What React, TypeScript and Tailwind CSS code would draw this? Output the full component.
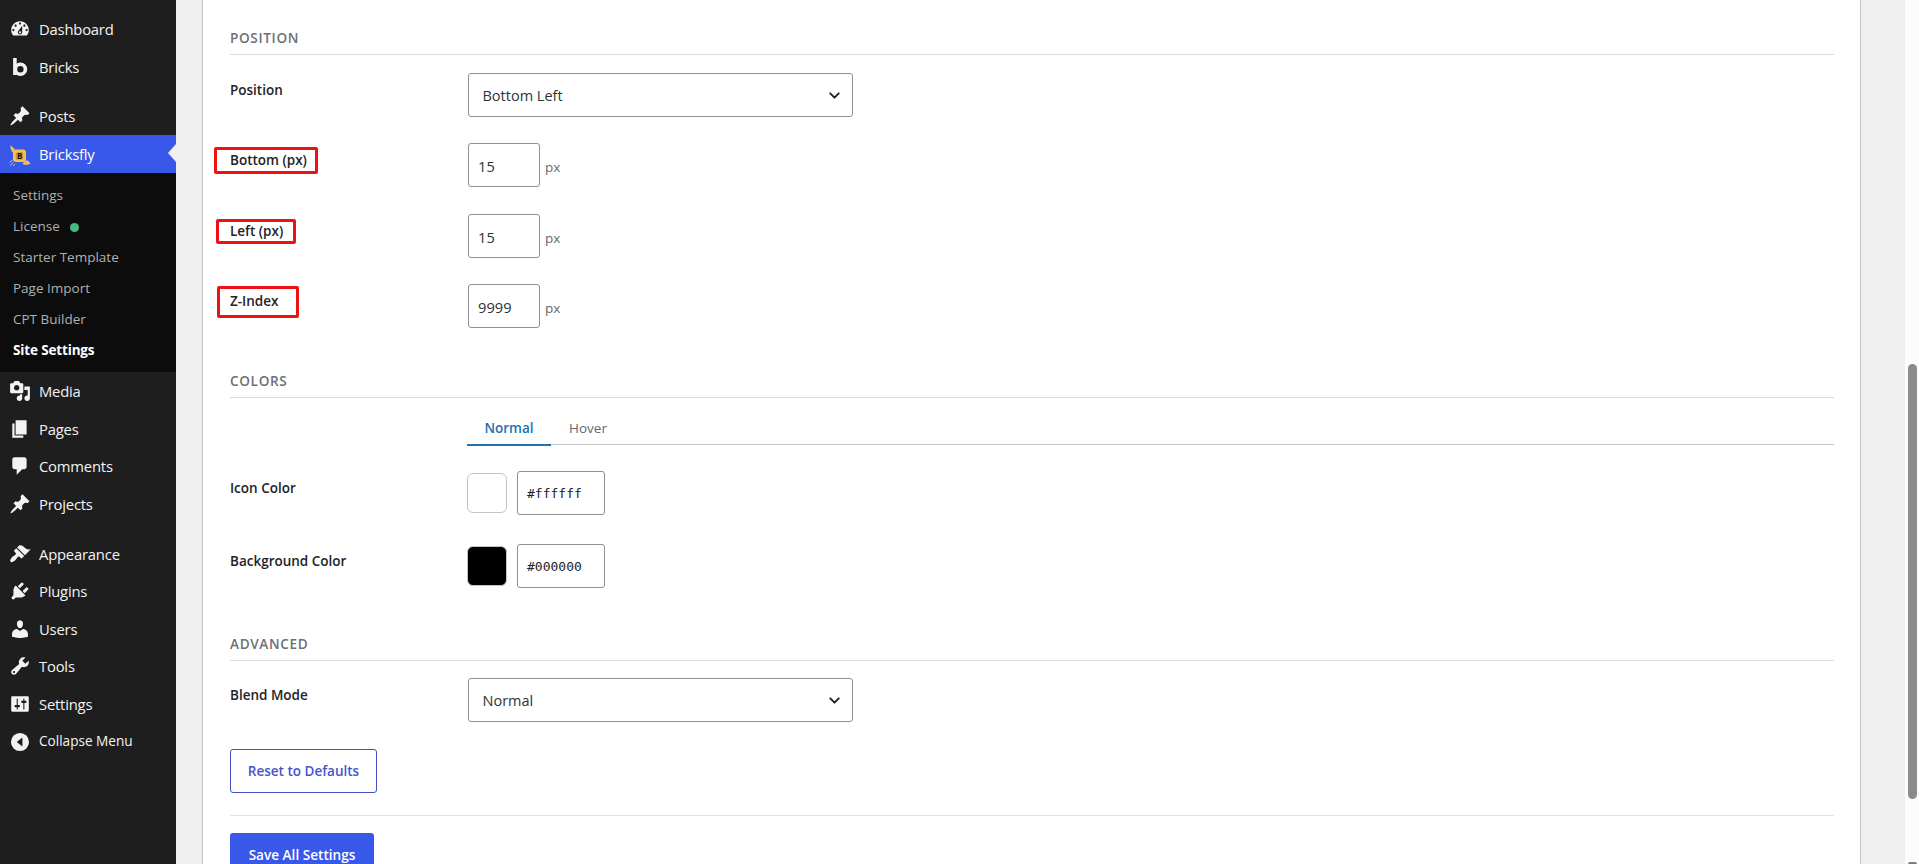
import React from 'react';
import { ChevronDown } from 'lucide-react';

const ICONS: Record<string, string> = {
  dashboard:
    'M3.76 16h12.48c1.1-1.37 1.76-3.11 1.76-5 0-4.42-3.58-8-8-8s-8 3.58-8 8c0 1.89.66 3.63 1.76 5zM10 4c.55 0 1 .45 1 1s-.45 1-1 1-1-.45-1-1 .45-1 1-1zM6 6c.55 0 1 .45 1 1s-.45 1-1 1-1-.45-1-1 .45-1 1-1zm8 0c.55 0 1 .45 1 1s-.45 1-1 1-1-.45-1-1 .45-1 1-1zm-5.37 5.55L12 7v6c0 1.1-.9 2-2 2s-2-.9-2-2c0-.57.24-1.08.63-1.45zM4 10c.55 0 1 .45 1 1s-.45 1-1 1-1-.45-1-1 .45-1 1-1zm12 0c.55 0 1 .45 1 1s-.45 1-1 1-1-.45-1-1 .45-1 1-1zm-5 3c0-.55-.45-1-1-1s-1 .45-1 1 .45 1 1 1 1-.45 1-1z',
  pin: 'M10.44 3.02l1.82-1.82 6.36 6.35-1.83 1.82c-1.05-.68-2.48-.57-3.41.36l-.75.75c-.92.93-1.04 2.35-.35 3.41l-1.83 1.82-2.41-2.41-2.8 2.79c-.42.42-3.38 2.71-3.8 2.29s1.86-3.39 2.28-3.81l2.79-2.79L4.1 9.36l1.83-1.82c1.05.69 2.48.57 3.4-.36l.75-.75c.93-.92 1.05-2.35.36-3.41z',
  media:
    'M13 11V4c0-.55-.45-1-1-1h-1.67L9 1H5L3.67 3H2c-.55 0-1 .45-1 1v7c0 .55.45 1 1 1h10c.55 0 1-.45 1-1zM7 4.5c1.38 0 2.5 1.12 2.5 2.5S8.38 9.5 7 9.5 4.5 8.38 4.5 7 5.62 4.5 7 4.5zM14 6h5v10.5c0 1.38-1.12 2.5-2.5 2.5S14 17.88 14 16.5s1.12-2.5 2.5-2.5c.17 0 .34.02.5.05V9h-3V6zm-4 8.05V13h2v3.5c0 1.38-1.12 2.5-2.5 2.5S7 17.88 7 16.5 8.12 14 9.5 14c.17 0 .34.02.5.05z',
  page: 'M6 15V2h10v13H6zm-1 1h8v2H3V5h2v11z',
  comment: 'M5 2h9c1.1 0 2 .9 2 2v7c0 1.1-.9 2-2 2h-2l-5 5v-5H5c-1.1 0-2-.9-2-2V4c0-1.1.9-2 2-2z',
  brush:
    'M14.48 11.06L7.41 3.99l1.5-1.5c.5-.56 2.3-.47 3.51.32 1.21.8 1.43 1.28 2.91 2.1 1.18.64 2.45 1.26 4.45.85zm-.71.71L6.7 4.7 4.93 6.47c-.39.39-.39 1.02 0 1.41l1.06 1.06c.39.39.39 1.03 0 1.42-.6.6-1.43 1.11-2.21 1.69-.35.26-.7.53-1.01.84C1.43 14.23.4 16.08 1.4 17.07c.99 1 2.84-.03 4.18-1.36.31-.31.58-.66.85-1.02.57-.78 1.08-1.61 1.69-2.21.39-.39 1.02-.39 1.41 0l1.06 1.06c.39.39 1.02.39 1.41 0z',
  plug: 'M13.11 4.36L9.87 7.6 8 5.73l3.24-3.24c.35-.34 1.05-.2 1.56.32.52.51.66 1.21.31 1.55zm-8 1.77l.91-1.12 9.01 9.01-1.19.84c-.71.71-2.63 1.16-3.82 1.16H6.14L4.9 17.26c-.59.59-1.54.59-2.12 0-.59-.58-.59-1.53 0-2.12l1.24-1.24v-3.88c0-1.13.4-3.19 1.09-3.89zm7.26 3.97l3.24-3.24c.34-.35 1.04-.21 1.55.31.52.51.66 1.21.31 1.55l-3.24 3.25z',
  user: 'M10 9.25c-2.27 0-2.73-3.44-2.73-3.44C7 4.02 7.82 2 9.97 2c2.16 0 2.98 2.02 2.71 3.81 0 0-.41 3.44-2.68 3.44zm0 2.57L12.72 10c2.39 0 4.52 2.33 4.52 4.53v2.49s-3.65 1.13-7.24 1.13c-3.65 0-7.24-1.13-7.24-1.13v-2.49c0-2.25 1.94-4.48 4.47-4.48z',
  wrench:
    'M16.68 9.77c-1.34 1.34-3.3 1.67-4.95.99l-5.41 6.52c-.99.99-2.59.99-3.58 0s-.99-2.59 0-3.57l6.52-5.42c-.68-1.65-.35-3.61.99-4.95 1.28-1.28 3.12-1.62 4.72-1.06l-2.89 2.89 2.82 2.82 2.86-2.87c.53 1.58.18 3.39-1.08 4.65zM3.81 16.21c.4.39 1.04.39 1.43 0 .4-.4.4-1.04 0-1.43-.39-.4-1.03-.4-1.43 0-.39.39-.39 1.03 0 1.43z',
  sliders:
    'M18 16V4c0-.55-.45-1-1-1H3c-.55 0-1 .45-1 1v12c0 .55.45 1 1 1h14c.55 0 1-.45 1-1zM8 11h1c.55 0 1 .45 1 1s-.45 1-1 1H8v1.5c0 .28-.22.5-.5.5s-.5-.22-.5-.5V13H6c-.55 0-1-.45-1-1s.45-1 1-1h1V5.500c0-.28.22-.5.5-.5s.5.22.5.5V11zm5-2h-1c-.55 0-1-.45-1-1s.45-1 1-1h1V5.5c0-.28.22-.5.5-.5s.5.22.5.5V7h1c.55 0 1 .45 1 1s-.45 1-1 1h-1v5.5c0 .28-.22.5-.5.5s-.5-.22-.5-.5V9z',
  collapse: 'M10 1.8a8.2 8.2 0 1 0 0 16.4 8.2 8.2 0 0 0 0-16.4zM12.2 6v8L7 10z',
};

const MenuIcon = ({ name }: { name: string }) => {
  if (name === 'bricks') {
    return (
      <svg viewBox="0 0 22 22" className="size-[22px] shrink-0" fill="none" stroke="#f3f3f3">
        <path d="M5.9 2v17" strokeWidth="3.6" />
        <circle cx="11.4" cy="13.2" r="5" strokeWidth="3.6" />
      </svg>
    );
  }
  if (name === 'bricksfly') {
    return (
      <svg viewBox="0 0 22 22" className="mt-0.5 size-[22px] shrink-0">
        <path d="M1.3 1.2c1.5.8 2.8 2.300 4.600 3.800l-1.600 4C2.400 7.500 1.200 4.500 1.300 1.200z" fill="#f0bd56" />
        <path d="M13.500 20c1.500-2.500 3.500-4 5.500-3.300l2.600 2.700c-2 1.600-5.300 2-8.100.6z" fill="#f0bd56" />
        <rect x="4" y="5.600" width="13" height="12.400" rx="3" fill="#f4c14d" />
        <rect x="6.800" y="8.200" width="7.400" height="7.600" rx="1.500" fill="#c99a37" />
        <text x="10.500" y="15" textAnchor="middle" fontSize="8" fontWeight="700" fill="#20190c" className="font-['Open_Sans',sans-serif]">
          B
        </text>
        <path d="M.5 18.500l3-2.500M.8 21.500l3.500-3M4 22l2-2" stroke="#aebff5" strokeWidth="1" />
      </svg>
    );
  }
  return (
    <svg viewBox="0 0 20 20" className="size-[22px] shrink-0" fill="#f3f3f3" fillRule="evenodd">
      <path d={ICONS[name]} />
    </svg>
  );
};

interface Item {
  icon: string;
  label: string;
  className?: string;
}

const MENU_TOP: Item[] = [
  { icon: 'dashboard', label: 'Dashboard' },
  { icon: 'bricks', label: 'Bricks' },
  { icon: 'pin', label: 'Posts', className: 'mt-[11.700px]' },
];

const MENU_BOTTOM: Item[] = [
  { icon: 'media', label: 'Media' },
  { icon: 'page', label: 'Pages' },
  { icon: 'comment', label: 'Comments' },
  { icon: 'pin', label: 'Projects' },
  { icon: 'brush', label: 'Appearance', className: 'mt-3' },
  { icon: 'plug', label: 'Plugins' },
  { icon: 'user', label: 'Users' },
  { icon: 'wrench', label: 'Tools' },
  { icon: 'sliders', label: 'Settings' },
];

const SUBMENU = ['Settings', 'License', 'Starter Template', 'Page Import', 'CPT Builder', 'Site Settings'];

const MenuItem = ({ icon, label, className = '' }: Item) => (
  <a className={`flex h-[37.600px] items-center gap-2 pl-[9px] text-[14.800px] tracking-[-0.200px] text-[#f3f3f3] ${className}`}>
    <MenuIcon name={icon} />
    <span>{label}</span>
  </a>
);

const Sidebar = () => (
  <nav className="w-44 shrink-0 bg-[#1e1e1e] pt-[10.500px]">
    {MENU_TOP.map((item) => (
      <MenuItem key={item.label} {...item} />
    ))}
    <a className="relative flex h-[38px] items-center gap-2 bg-[#3858e9] pl-[9px] text-[14.800px] tracking-[-0.200px] text-white">
      <MenuIcon name="bricksfly" />
      <span>Bricksfly</span>
      <span className="absolute right-0 top-[9.500px] border-y-[9px] border-r-[8px] border-y-transparent border-r-[#efefef]" />
    </a>
    <ul className="h-[199px] bg-[#0c0c0c] pt-[7px]">
      {SUBMENU.map((label) => (
        <li
          key={label}
          className={`flex h-[31px] items-center pl-[13px] text-[13.500px] ${
            label === 'Site Settings' ? 'font-bold tracking-[-0.150px] text-white' : 'text-[#b0b0b0]'
          }`}
        >
          {label}
          {label === 'License' && <span className="ml-2.5 mt-[3px] size-[9px] rounded-full bg-[#4ab883]" />}
        </li>
      ))}
    </ul>
    <div className="pt-[0.500px]">
      {MENU_BOTTOM.map((item) => (
        <MenuItem key={item.label} {...item} />
      ))}
    </div>
    <a className="flex h-[37.600px] items-center gap-2 pl-[9px] text-[13.600px] text-[#f3f3f3]">
      <MenuIcon name="collapse" />
      <span>Collapse Menu</span>
    </a>
  </nav>
);

const SectionTitle = ({ children, className = '' }: { children: string; className?: string }) => (
  <h3 className={`flex h-[34px] items-center border-b border-[#dcdcde] pt-px text-[13.600px] font-semibold tracking-[0.650px] text-[#6c7076] ${className}`}>
    {children}
  </h3>
);

interface RowProps {
  label: string;
  className?: string;
  mark?: string;
  children: React.ReactNode;
}

const Row = ({ label, className = '', mark, children }: RowProps) => (
  <div className={`flex ${className}`}>
    <div className="w-[238px] shrink-0 pt-1">
      <label className="relative inline-block text-[13.500px] font-semibold leading-5 text-[#1d2327]">
        {label}
        {mark && <span className={`absolute rounded-[2px] border-3 border-[#ee1111] ${mark}`} />}
      </label>
    </div>
    {children}
  </div>
);

const Select = ({ value }: { value: string }) => (
  <div className="flex h-11 w-[385px] items-center justify-between rounded-[3px] border border-[#8c8f94] pl-[13.500px] pr-[9px] text-[14.500px] text-[#2c3338]">
    <span className="pt-px">{value}</span>
    <ChevronDown className="mt-px size-[17px] text-[#1d2327]" strokeWidth={2.7} />
  </div>
);

const NumberField = ({ value }: { value: string }) => (
  <div className="flex items-center">
    <div className="flex h-11 w-[72px] items-center rounded-[3px] border border-[#8c8f94] pl-[9px] pt-[3px] text-[14.700px] text-[#2c3338]">
      {value}
    </div>
    <span className="ml-[5px] mt-1 text-[13.500px] text-[#646970]">px</span>
  </div>
);

const ColorField = ({ value, swatch }: { value: string; swatch: string }) => (
  <div className="-ml-px flex items-center">
    <span className={`size-10 rounded-[6px] border border-[#c3c4c7] ${swatch}`} />
    <div className="ml-2.5 flex h-11 w-[88px] items-center rounded-[3px] border border-[#8c8f94] pl-[9px] pt-px font-['DejaVu_Sans_Mono',monospace] text-[13px] text-[#1d2327]">
      {value}
    </div>
  </div>
);

const App: React.FC = () => (
  <div className="flex h-[864px] w-[1919px] overflow-hidden bg-[#efefef] font-['Open_Sans','Noto_Sans',sans-serif]">
    <Sidebar />

    <main className="ml-[26px] mr-[44px] flex-1 border-x border-[#c3c4c7] bg-white pl-[27px] pr-[26px] pt-[21px]">
      <SectionTitle>POSITION</SectionTitle>
      <Row label="Position" className="mt-[18px]">
        <Select value="Bottom Left" />
      </Row>
      <Row label="Bottom (px)" className="mt-[26px]" mark="-left-4 -top-[3px] h-[27px] w-[104px]">
        <NumberField value="15" />
      </Row>
      <Row label="Left (px)" className="mt-[27px]" mark="-left-3.5 -top-0.5 h-[25px] w-20">
        <NumberField value="15" />
      </Row>
      <Row label="Z-Index" className="mt-[26px]" mark="-left-[13px] -top-[5px] h-8 w-[82px]">
        <NumberField value="9999" />
      </Row>

      <SectionTitle className="mt-9">COLORS</SectionTitle>
      <div className="ml-[237px] mt-[11px] flex h-9 border-b border-[#c3c4c7] text-[13.500px]">
        <span className="h-[37px] w-[84px] border-b-2 border-[#2271b1] pt-[9px] text-center font-semibold text-[#2271b1]">Normal</span>
        <span className="pl-[18px] pt-[9px] text-[#646970]">Hover</span>
      </div>
      <Row label="Icon Color" className="mt-[26px]">
        <ColorField value="#ffffff" swatch="bg-white" />
      </Row>
      <Row label="Background Color" className="mt-[29px]">
        <ColorField value="#000000" swatch="bg-black" />
      </Row>

      <SectionTitle className="mt-[39px]">ADVANCED</SectionTitle>
      <Row label="Blend Mode" className="mt-[17px]">
        <Select value="Normal" />
      </Row>

      <button className="mt-[27px] flex h-11 w-[147px] items-center justify-center rounded-[3px] border border-[#3f51c5] pt-px text-[13.500px] font-semibold text-[#4455cf]">
        Reset to Defaults
      </button>
      <div className="mt-[22px] border-t border-[#e2e2e4] pt-[17px]">
        <button className="flex h-11 w-[144px] items-center justify-center rounded-[3px] bg-[#3858e9] pt-px text-[13.600px] font-semibold text-white">
          Save All Settings
        </button>
      </div>
    </main>

    {/* page scrollbar */}
    <div className="flex w-3.5 shrink-0 flex-col items-center bg-[#fcfcfc] pt-[364px]">
      <span className="h-[435px] w-[9px] shrink-0 rounded-full bg-[#8b8b8b]" />
      <span className="mt-[63px] h-1 w-[9px] shrink-0 rounded-t-[2px] bg-[#7f7f7f]" />
    </div>
  </div>
);

export default App;
